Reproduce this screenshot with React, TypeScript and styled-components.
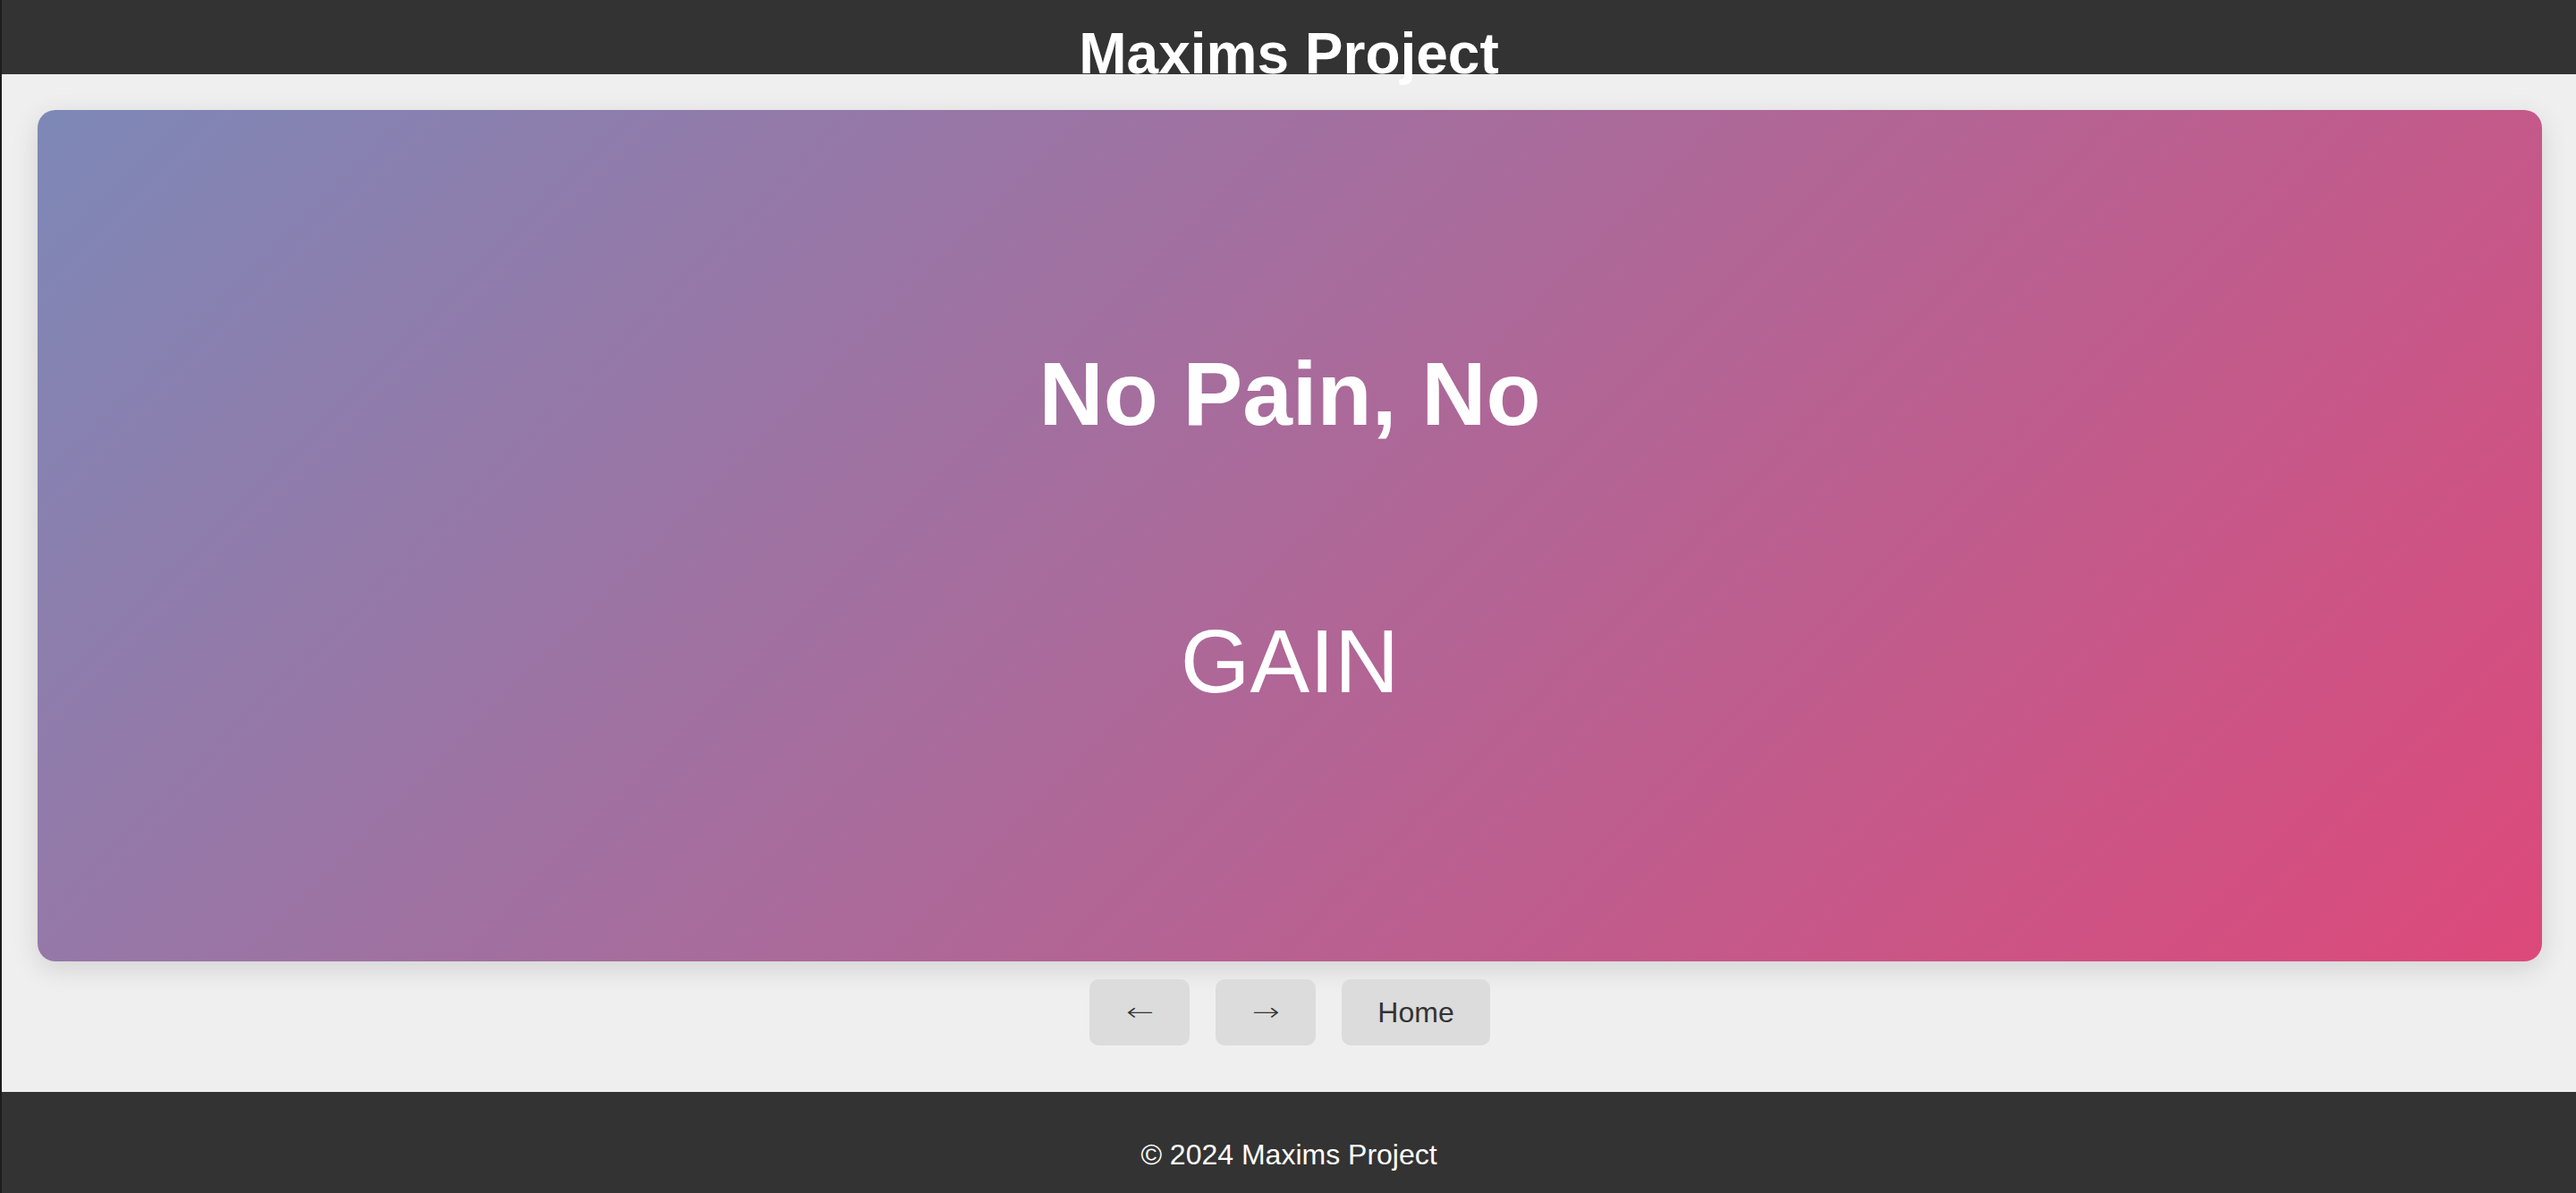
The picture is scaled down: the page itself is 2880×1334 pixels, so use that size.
import React from "react";
import styled, { createGlobalStyle } from "styled-components";

const GlobalStyle = createGlobalStyle`
  html, body {
    margin: 0;
    padding: 0;
  }
  body {
    background: #efefef;
    font-family: "Liberation Sans", Arial, sans-serif;
    border-left: 2px solid #1c1c1c;
  }
`;

const Page = styled.div`
  display: flex;
  flex-direction: column;
  min-height: 100vh;
`;

const Header = styled.header`
  box-sizing: border-box;
  height: 83px;
  padding-top: 23px;
  background: #333333;
  color: #ffffff;
  text-align: center;
  overflow: visible;
  position: relative;
  z-index: 2;
`;

const Title = styled.h1`
  margin: 0;
  font-size: 64px;
  font-weight: 700;
  line-height: normal;
`;

const Main = styled.main`
  display: flex;
  flex-direction: column;
  align-items: center;
  padding: 40px 38px 52px 40px;
`;

const Card = styled.section`
  box-sizing: border-box;
  width: 100%;
  height: 952px;
  border-radius: 20px;
  background: linear-gradient(135deg, #7d88b7 0%, #dc497a 100%);
  box-shadow: 0 8px 30px rgba(0, 0, 0, 0.12);
  display: flex;
  flex-direction: column;
  align-items: center;
  justify-content: center;
  gap: 184px;
  padding-bottom: 18px;
  color: #ffffff;
  text-align: center;
`;

const Phrase = styled.div<{ $bold?: boolean }>`
  font-size: 100px;
  line-height: 115px;
  font-weight: ${(p) => (p.$bold ? 700 : 400)};
`;

const Controls = styled.nav`
  display: flex;
  gap: 29px;
  margin-top: 20px;
`;

const NavButton = styled.button`
  box-sizing: border-box;
  height: 74px;
  min-width: 112px;
  padding: 0 40px;
  border: none;
  border-radius: 10px;
  background: #dcdcdc;
  color: #333333;
  font-family: "Liberation Sans", Arial, sans-serif;
  font-size: 32px;
  line-height: 38px;
  cursor: pointer;
  display: flex;
  align-items: center;
  justify-content: center;
`;

const Arrow = styled.span`
  font-family: "DejaVu Sans", "Liberation Sans", sans-serif;
  font-size: 37px;
  font-weight: 200;
  line-height: 38px;
  display: inline-block;
  transform: scaleY(0.75);
`;

const Footer = styled.footer`
  background: #333333;
  color: #ffffff;
  text-align: center;
  padding: 20px;
`;

const FooterText = styled.p`
  margin: 32px 0;
  font-size: 32px;
  line-height: normal;
`;

export default function App() {
  return (
    <>
      <GlobalStyle />
      <Page>
        <Header>
          <Title>Maxims Project</Title>
        </Header>
        <Main>
          <Card>
            <Phrase $bold>No Pain, No</Phrase>
            <Phrase>GAIN</Phrase>
          </Card>
          <Controls>
            <NavButton>
              <Arrow>←</Arrow>
            </NavButton>
            <NavButton>
              <Arrow>→</Arrow>
            </NavButton>
            <NavButton>Home</NavButton>
          </Controls>
        </Main>
        <Footer>
          <FooterText>© 2024 Maxims Project</FooterText>
        </Footer>
      </Page>
    </>
  );
}
